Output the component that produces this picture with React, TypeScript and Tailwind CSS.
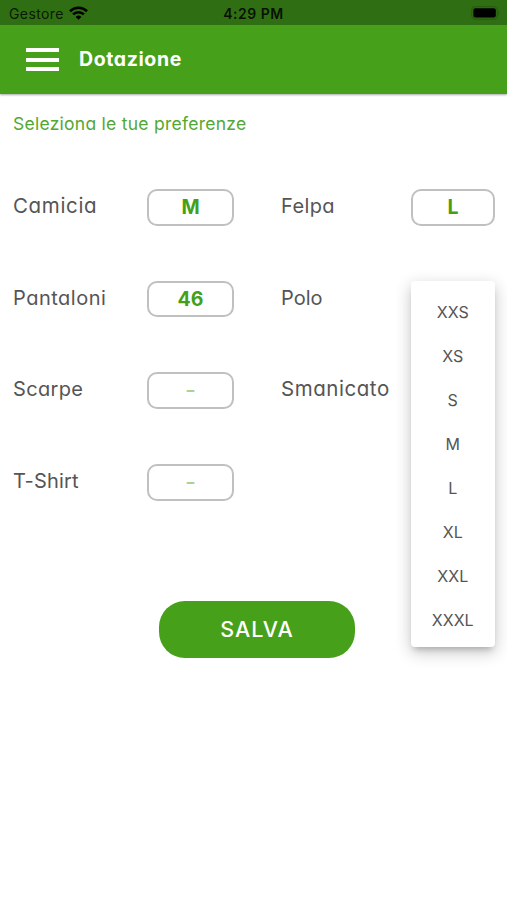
const SIZES = ["XXS", "XS", "S", "M", "L", "XL", "XXL", "XXXL"];

function StatusBar() {
  return (
    <div className="relative flex h-[25px] items-center justify-between bg-[#306e13] pl-[9px] pr-[7px] pt-px text-black">
      <div className="flex items-center gap-[5px]">
        <span className="pt-px text-[14px] leading-none tracking-[0.4px] text-black/80">Gestore</span>
        <svg width="19" height="14" viewBox="0 0 19 14" fill="none" stroke="#000" strokeWidth="2.7">
          <path d="M1 5.2a12.2 12.2 0 0 1 17 0" />
          <path d="M4.1 8.4a7.8 7.8 0 0 1 10.8 0" />
          <path d="M9.5 13.8 6.6 10.9a4.2 4.2 0 0 1 5.8 0Z" fill="#000" stroke="none" />
        </svg>
      </div>
      <span className="absolute left-1/2 top-[6px] -translate-x-1/2 whitespace-nowrap text-[14px] font-semibold leading-[16px] tracking-[0.5px] text-black/85">
        4:29 PM
      </span>
      <svg width="29" height="14" viewBox="0 0 29 14" fill="none">
        <rect x="0.8" y="0.7" width="25.4" height="12.4" rx="3.6" stroke="#285d0f" strokeWidth="1.2" />
        <rect x="2.4" y="2.2" width="22.4" height="9.2" rx="2" fill="#000" />
        <path d="M27.2 4.6c1.4.6 1.4 4 0 4.6Z" fill="#285d0f" />
      </svg>
    </div>
  );
}

function Header() {
  return (
    <header className="flex h-[69px] items-center bg-[#47a01a] pl-[26px] shadow-[0_1px_2px_rgba(0,0,0,0.35)]">
      <div className="flex w-[33px] flex-col gap-[5.5px]">
        <span className="h-[4px] bg-white" />
        <span className="h-[4px] bg-white" />
        <span className="h-[4px] bg-white" />
      </div>
      <h1 className="ml-5 text-[19.5px] font-bold leading-none tracking-[0.6px] text-white">Dotazione</h1>
    </header>
  );
}

function Label({ text, className }: { text: string; className: string }) {
  return (
    <span className={`whitespace-nowrap pt-[2px] leading-[30px] text-[#555] ${className}`}>{text}</span>
  );
}

function SizeBox({ value, className }: { value: string; className: string }) {
  return (
    <button
      className={`flex h-[36.5px] items-center justify-center rounded-[10px] border-2 border-[#c0c0c0] bg-white pt-px text-[19.5px] font-bold leading-none text-[#43a018] ${className}`}
    >
      {value === "-" ? <span className="-mt-[3px] text-[15px] font-extrabold text-[#a9d394]">–</span> : value}
    </button>
  );
}

function SizeMenu() {
  return (
    <ul className="absolute left-0 top-0 z-10 w-[83.5px] rounded-[4px] bg-white pb-[5px] pt-[9px] shadow-[0_5px_6px_-3px_rgba(0,0,0,0.22),0_5px_16px_1px_rgba(0,0,0,0.2)]">
      {SIZES.map((size) => (
        <li key={size} className="flex h-[44px] items-center justify-center text-[16px] text-[#555]">
          {size}
        </li>
      ))}
    </ul>
  );
}

export default function App() {
  return (
    <div className="min-h-[900px] w-[507px] bg-white font-['Inter',sans-serif] [font-feature-settings:'cv11']">
      <StatusBar />
      <Header />
      <main className="pl-[13px] pr-3 pt-[17px]">
        <p className="whitespace-nowrap text-[17.5px] leading-[26px] tracking-[0.26px] text-[#54a733]">
          Seleziona le tue preferenze
        </p>
        <div className="mt-[52px] grid grid-cols-[134px_134px_130px_84px] grid-rows-[91.7px_91.7px_91.7px_37px]">
          <Label text="Camicia" className="text-[20.5px] tracking-[0.65px]" />
          <SizeBox value="M" className="w-[87px]" />
          <Label text="Felpa" className="text-[20px] tracking-[0.4px]" />
          <SizeBox value="L" className="w-[84px]" />

          <Label text="Pantaloni" className="text-[20px] tracking-[0.5px]" />
          <SizeBox value="46" className="w-[87px]" />
          <Label text="Polo" className="text-[20px] tracking-normal" />
          <div className="relative">
            <SizeMenu />
          </div>

          <Label text="Scarpe" className="text-[20px] tracking-[0.35px]" />
          <SizeBox value="-" className="w-[87px]" />
          <Label text="Smanicato" className="text-[20.5px] tracking-[0.55px]" />
          <div />

          <Label text="T-Shirt" className="text-[20px] tracking-[0.15px]" />
          <SizeBox value="-" className="w-[87px]" />
        </div>
        <button className="ml-[146px] mt-[100px] flex h-[57px] w-[196px] items-center justify-center rounded-[26px] bg-[#47a01a] pb-px text-[21.5px] font-medium tracking-[1px] text-white">
          SALVA
        </button>
      </main>
    </div>
  );
}
